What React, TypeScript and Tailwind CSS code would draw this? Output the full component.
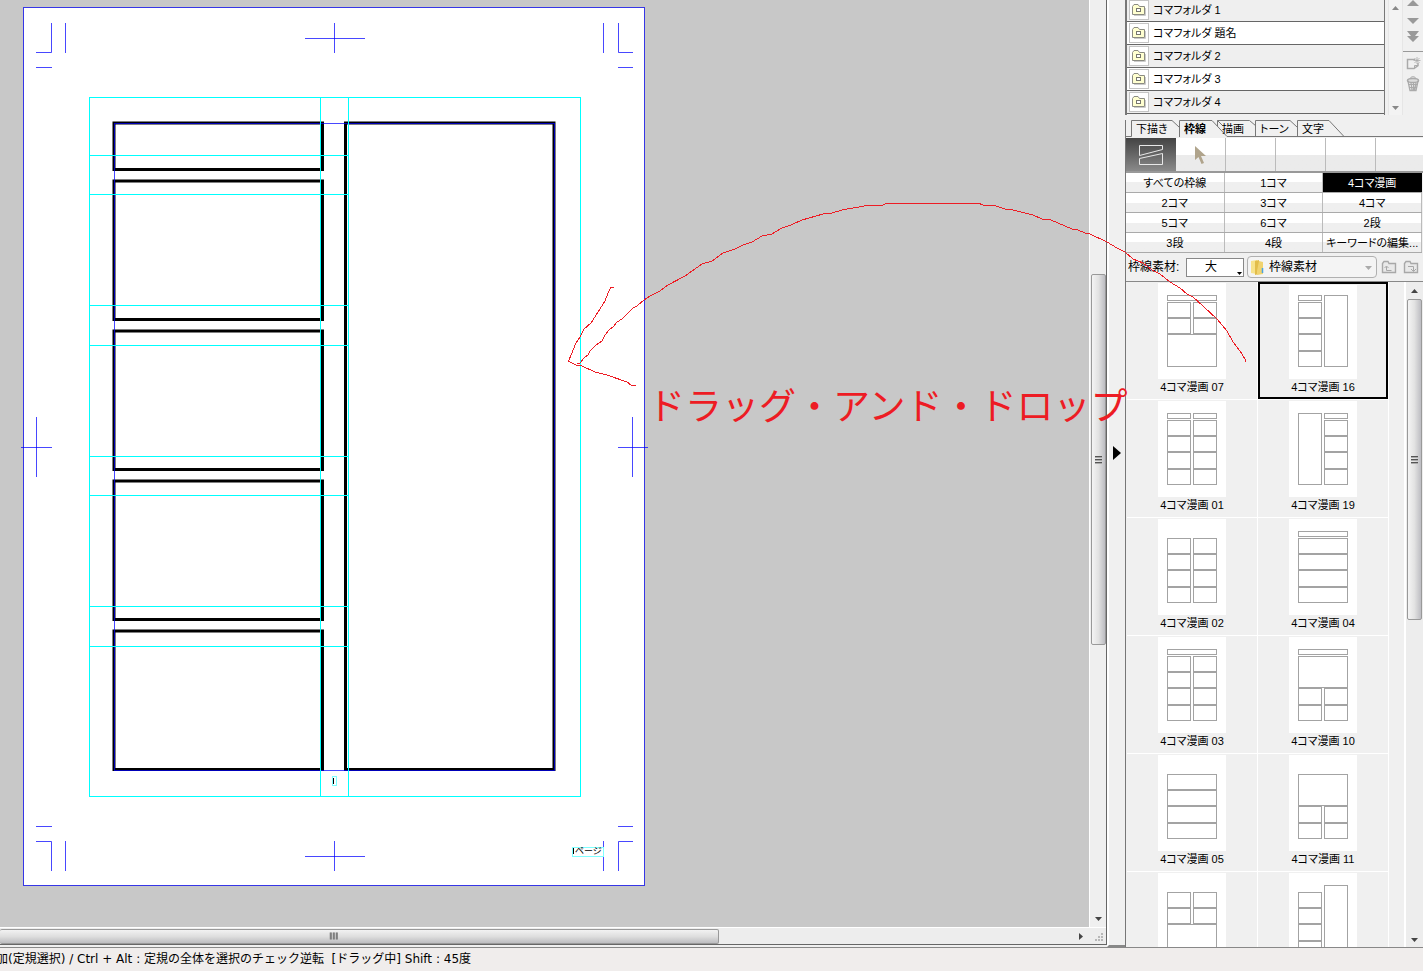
import { ReactNode } from 'react';

const UI_FONT = "font-['Liberation_Sans','Noto_Sans_CJK_JP',sans-serif] [font-feature-settings:'palt']";

const layers = ['コマフォルダ 1', 'コマフォルダ 題名', 'コマフォルダ 2', 'コマフォルダ 3', 'コマフォルダ 4'];

const tabs = [
  { name: '下描き', width: 'w-12' },
  { name: '枠線', width: 'w-[38px]' },
  { name: '描画', width: 'w-[38px]' },
  { name: 'トーン', width: 'w-[42px]' },
  { name: '文字', width: 'w-10' },
];

const keywords = [
  'すべての枠線', '1コマ', '4コマ漫画',
  '2コマ', '3コマ', '4コマ',
  '5コマ', '6コマ', '2段',
  '3段', '4段', 'キーワードの編集...',
];

type Box = [number, number, number, number];

const title = (x: number, w: number): Box => [x, 12, w, 5];
const ROWS: [number, number][] = [[19, 15], [35, 15], [51, 16], [68, 15]];
const rows = (x: number, w: number, from = 0, to = 4): Box[] =>
  ROWS.slice(from, to).map(([y, h]) => [x, y, w, h]);
const L = 9;
const R = 35;
const HALF = 23;
const FULL = 49;

const materials: { name?: string; boxes: Box[] }[] = [
  { name: '4コマ漫画 07', boxes: [title(L, FULL), ...rows(L, HALF, 0, 2), ...rows(R, HALF, 0, 2), [L, 51, FULL, 32]] },
  { name: '4コマ漫画 16', boxes: [title(L, HALF), ...rows(L, HALF), [R, 12, HALF, 71]] },
  { name: '4コマ漫画 01', boxes: [title(L, HALF), title(R, HALF), ...rows(L, HALF), ...rows(R, HALF)] },
  { name: '4コマ漫画 19', boxes: [[L, 12, HALF, 71], title(R, HALF), ...rows(R, HALF)] },
  { name: '4コマ漫画 02', boxes: [...rows(L, HALF), ...rows(R, HALF)] },
  { name: '4コマ漫画 04', boxes: [title(L, FULL), ...rows(L, FULL)] },
  { name: '4コマ漫画 03', boxes: [title(L, FULL), ...rows(L, HALF), ...rows(R, HALF)] },
  { name: '4コマ漫画 10', boxes: [title(L, FULL), [L, 19, FULL, 31], ...rows(L, HALF, 2), ...rows(R, HALF, 2)] },
  { name: '4コマ漫画 05', boxes: rows(L, FULL) },
  { name: '4コマ漫画 11', boxes: [[L, 19, FULL, 31], ...rows(L, HALF, 2), ...rows(R, HALF, 2)] },
  { boxes: [...rows(L, HALF, 0, 2), ...rows(R, HALF, 0, 2), [L, 51, FULL, 32]] },
  { boxes: [...rows(L, HALF), [R, 12, HALF, 71]] },
];

function Arrow({ dir, className = 'text-[#444]' }: { dir: 'up' | 'down' | 'right'; className?: string }) {
  const d = { up: 'M0 6 L3.5 2 L7 6Z', down: 'M0 2 L3.5 6 L7 2Z', right: 'M2 0 L6 3.5 L2 7Z' }[dir];
  return (
    <svg width="7" height="7" viewBox="0 0 7 7" className={className} aria-hidden="true">
      <path d={d} fill="currentColor" />
    </svg>
  );
}

function Grip() {
  return (
    <span className="flex flex-col gap-px" aria-hidden="true">
      {[0, 1, 2].map((i) => (
        <span key={i} className="h-0.5 w-[7px] border-t border-[#555] bg-[#aaa]" />
      ))}
    </span>
  );
}

function Page() {
  const frames: Box[] = [
    [114, 123, 208.5, 46.5],
    [114, 181, 208.5, 138.5],
    [114, 331, 208.5, 138.5],
    [114, 481, 208.5, 138.5],
    [114, 631, 208.5, 138.5],
    [345.5, 123, 208.5, 646.5],
  ];
  const guides = [155, 194, 305, 345, 456, 495, 606, 646];
  return (
    <svg width="1089" height="927" viewBox="0 0 1089 927" className="shrink-0" role="img" aria-label="原稿用紙">
      <rect x="23.5" y="7.5" width="621" height="878" fill="#fff" stroke="#3636e6" />
      <g fill="none" stroke="#000" strokeWidth="3">
        {frames.map(([x, y, w, h], i) => (
          <rect key={i} x={x} y={y} width={w} height={h} />
        ))}
      </g>
      <rect x="114.5" y="123.5" width="440" height="647" fill="none" stroke="#0000ff" strokeOpacity="0.72" />
      <path
        stroke="#0000ff"
        strokeOpacity="0.72"
        fill="none"
        d="M36 52.5H51.5V23M65.5 23V53M36 67.5H52M305 38.5H365M334.5 23V53M603.5 23V53M618.5 23V52.5H633M618 67.5H633
           M21 447.5H52M36.5 417V477M618 447.5H648M632.5 417V477
           M36 826.5H52M36 841.5H51.5V871M65.5 841V871M305 856.5H365M334.5 841V871M603.5 841V871M618.5 871V841.5H633M618 826.5H633"
      />
      <g stroke="#00ffff" fill="none">
        <rect x="89.5" y="97.5" width="491" height="699" />
        <path d="M320.5 97V797M348.5 97V797" />
        {guides.map((y) => (
          <path key={y} d={`M89 ${y + 0.5}H349`} />
        ))}
      </g>
      <rect x="332.5" y="776.5" width="4" height="9" fill="#fff" stroke="#7fffff" />
      <path d="M333.5 778V784" stroke="#000" />
      <rect x="572.5" y="847.5" width="31" height="9" fill="#fff" stroke="#7fffff" />
      <path d="M573.5 848V854" stroke="#000" />
      <text x="575" y="854" fontSize="9" className="font-['Noto_Sans_CJK_JP',sans-serif]">ページ</text>
    </svg>
  );
}

function LayerIcon() {
  return (
    <span className="ml-0.5 flex h-5 w-5 shrink-0 items-center justify-center border border-[#c4c4c4] bg-white">
      <svg width="14" height="12" viewBox="0 0 14 12">
        <path d="M.5 10.5V2.5L2 .5H6L7.5 2.5H12.5V10.5Z" fill="#ffffd0" stroke="#8c8c82" />
        <path d="M13.5 4V11.5H2" stroke="#ccc" fill="none" />
        <rect x="4.5" y="4.5" width="4" height="3" fill="#fff" stroke="#77776e" />
      </svg>
    </span>
  );
}

function LayerPanel() {
  return (
    <section className="flex h-[115px] border-l-2 border-[#777] bg-[#f0f0f0]" aria-label="レイヤー">
      <ul className="-mt-px w-[258px] border-r border-[#777]">
        {layers.map((name, i) => (
          <li key={name} className={`h-[23px] border-b border-[#666] ${i % 2 ? 'bg-white' : 'bg-[#efefef]'}`}>
            <button className="flex h-[22px] w-full items-center gap-1 text-left">
              <LayerIcon />
              <span>{name}</span>
            </button>
          </li>
        ))}
      </ul>
      <div className="ml-[3px] flex w-[15px] flex-col items-center justify-between border-x border-[#e6e6e6] bg-[#f3f3f3] pt-1 pb-1">
        <Arrow dir="up" className="text-[#888]" />
        <Arrow dir="down" className="text-[#888]" />
      </div>
      <div className="flex flex-1 flex-col items-center overflow-hidden">
        <svg width="20" height="94" viewBox="0 0 20 94" className="shrink-0">
          <g fill="#999">
            <path d="M4 6L10 0L16 6Z" />
            <path d="M4 18L10 24L16 18Z" />
            <path d="M4 31H16L12 36H16L10 42L4 36H8Z" />
          </g>
          <path d="M0 51.5H20" stroke="#999" />
          <g fill="none" stroke="#aaa">
            <path d="M12 59.500H4.500V68.500H11L15 65.500V63" strokeWidth="1.500" />
            <path d="M11.500 68V65.500H15" />
            <path d="M14 57V64M10.500 60.500H17.500M11.500 58L16.500 63M16.500 58L11.500 63" strokeWidth="0.8" />
            <ellipse cx="10" cy="80.500" rx="5.500" ry="2" fill="#ddd" strokeWidth="1.500" />
            <path d="M7 79C7 76 13 76 13 79" />
            <path d="M5 81L7 90.500H13L15 81M8 83L9 90M10.500 83V90M13 83L11.500 90" strokeWidth="1.300" />
            <path d="M5.500 84.500H14.500M6 87.500H14" />
          </g>
        </svg>
      </div>
    </section>
  );
}

function Tabs() {
  return (
    <div className="relative mt-[5px] h-[18px] border-l border-[#777]" role="tablist">
      <svg width="298" height="18" viewBox="0 0 298 18" className="absolute top-0 left-0" aria-hidden="true">
        <path
          d="M0 16.500H5.500V.500H46L53 7M53.500 17V.500H86L101 16.500H298M97 6L91.500 .500H123.500L130 6M129.500 17V.500H164L171 7M171.500 17V.500H203L218 16.500"
          fill="none"
          stroke="#777"
        />
        <path d="M91.500 .500V6" stroke="#777" />
      </svg>
      <div className="relative flex h-[18px] items-center pl-1.5">
        {tabs.map((t, i) => (
          <button
            key={t.name}
            role="tab"
            aria-selected={i === 1}
            className={`${t.width} shrink-0 pl-1 text-left whitespace-nowrap ${i === 1 ? 'font-bold' : ''}`}
          >
            {t.name}
          </button>
        ))}
      </div>
    </div>
  );
}

function ToolStrip() {
  const cell =
    'flex h-[33px] w-[50px] shrink-0 items-center justify-center border-r border-[#bbb] bg-linear-to-b from-white from-50% to-[#ebebeb] to-50%';
  return (
    <div className="flex overflow-hidden border-b-2 border-[#999]">
      <button
        aria-label="枠線ツール"
        className="flex h-[33px] w-[50px] shrink-0 items-center justify-center bg-linear-to-b from-[#444] to-[#8a8a8a]"
      >
        <svg width="26" height="22" viewBox="0 0 26 22" fill="none" stroke="#e8e8e8">
          <path d="M1.500 1.500H24.500V5.500L1.500 11.500ZM1.500 14.500L24.500 9.500V20.500H1.500Z" />
        </svg>
      </button>
      <button aria-label="選択ツール" className={cell}>
        <svg width="16" height="20" viewBox="0 0 16 20" fill="#b0a48c">
          <path d="M2 1V15L5.500 12L8.500 19L11 18L8 11H13Z" />
        </svg>
      </button>
      {[0, 1, 2].map((i) => (
        <span key={i} className={cell} />
      ))}
      <span className="flex-1 bg-linear-to-b from-white from-50% to-[#ebebeb] to-50%" />
    </div>
  );
}

function Keywords() {
  return (
    <div className="mr-px grid grid-cols-3">
      {keywords.map((k) => (
        <div key={k} className="flex h-5 border-b border-[#aaa]">
          <button
            className={`flex-1 overflow-hidden border-r text-center whitespace-nowrap ${
              k === '4コマ漫画'
                ? 'border-black bg-black text-white'
                : 'border-[#bbb] bg-linear-to-b from-white from-50% to-[#efefef] to-50%'
            }`}
          >
            {k}
          </button>
        </div>
      ))}
    </div>
  );
}

function FolderButton({ label, children }: { label: string; children: ReactNode }) {
  return (
    <button aria-label={label} className="flex shrink-0">
      <svg width="16" height="14" viewBox="0 0 16 14" fill="none" stroke="#a8a8a8">
        <path d="M1.500 12.500V3.500L3 1.500H7L8 3.500H14.500V12.500Z" fill="#e9e9e9" strokeWidth="1.400" />
        {children}
      </svg>
    </button>
  );
}

function FilterBar() {
  return (
    <div className="flex h-[29px] items-center border-b border-[#888] bg-[#f0f0f0] pl-0.5">
      <label htmlFor="size" className="w-[58px] text-xs whitespace-nowrap">枠線素材:</label>
      <div className="relative">
        <select
          id="size"
          className="block h-[19px] w-[58px] appearance-none border border-[#888] bg-white pr-2 text-xs leading-4 [text-align-last:center]"
        >
          <option>大</option>
        </select>
        <svg width="5" height="3" viewBox="0 0 5 3" className="pointer-events-none absolute right-0.5 bottom-0.5">
          <path d="M0 0H5L2.500 3Z" />
        </svg>
      </div>
      <div className="relative ml-[3px] flex h-[22px] w-[130px] items-center rounded-sm border border-[#b0b0b0] bg-[#f4f4f4] pl-0.5">
        <svg width="16" height="17" viewBox="0 0 16 17" className="shrink-0">
          <path d="M1 2L7 1V15L1 14Z" fill="#f7e28a" />
          <path d="M5 2L9 1V15L5 16Z" fill="#e2bd4a" />
          <path d="M9 2L13 3V15L7 16V12Z" fill="#f0d370" />
          <path d="M12.500 9V14" stroke="#4ba3e0" strokeWidth="1.500" />
        </svg>
        <select aria-label="素材フォルダ" className="h-5 flex-1 appearance-none bg-transparent pl-[3px] text-xs leading-4">
          <option>枠線素材</option>
        </select>
        <span className="pointer-events-none absolute right-1">
          <Arrow dir="down" className="text-[#aaa]" />
        </span>
      </div>
      <div className="ml-1 flex flex-1 justify-between pr-1">
        <FolderButton label="上のフォルダへ">
          <path d="M10.500 10.500H5.500V6.500M3.500 8L5.500 6L7.500 8" />
        </FolderButton>
        <FolderButton label="下のフォルダへ">
          <path d="M5 6.500H10.500V11M8 9L10.500 11.500L13 9" />
        </FolderButton>
      </div>
    </div>
  );
}

function Gallery() {
  return (
    <div className="flex min-h-0 flex-1 overflow-hidden bg-[#f0f0f0]">
      <ul className="ml-px grid w-[262px] shrink-0 auto-rows-[118px] grid-cols-2 overflow-hidden">
        {materials.map((m, index) => {
          const selected = index === 1;
          return (
            <li key={index} className="border-r border-b border-white">
              <button
                className={`flex h-full w-full flex-col items-center pt-px ${
                  selected ? 'shadow-[inset_0_0_0_2px_#000]' : ''
                }`}
              >
                <svg
                  width="68"
                  height="96"
                  viewBox="0 0 68 96"
                  className={selected ? 'mt-0.5 h-[94px]' : ''}
                  preserveAspectRatio="xMidYMax slice"
                >
                  <rect width="68" height="96" fill="#fff" />
                  <g fill="none" stroke="#a3a3a3">
                    {m.boxes.map(([x, y, w, h], i) => (
                      <rect key={i} x={x + 0.5} y={y + 0.5} width={w} height={h} />
                    ))}
                  </g>
                </svg>
                {m.name && <span className="leading-4">{m.name}</span>}
              </button>
            </li>
          );
        })}
      </ul>
      <div className="flex-1" />
      <div className="flex w-[19px] flex-col items-center border-l-2 border-white bg-[#ededed] pr-px pb-1">
        <span className="flex h-[17px] shrink-0 items-center">
          <Arrow dir="up" />
        </span>
        <span className="flex h-[321px] w-[15px] shrink-0 items-center justify-center rounded-xs border border-[#999] bg-linear-to-r from-[#f4f4f4] via-[#e2e2e2] to-[#bdbdc2]">
          <Grip />
        </span>
        <span className="flex-1" />
        <Arrow dir="down" />
      </div>
    </div>
  );
}

function Annotation() {
  return (
    <div className="pointer-events-none absolute top-0 left-0">
      <svg width="1260" height="400" viewBox="0 0 1260 400" fill="none" stroke="#ed1c24" shapeRendering="crispEdges" aria-hidden="true">
        <polyline points="577,363 580,363 584,358 588,355 590,351 596,345 602,341 605,335 609,330 613,327 617,322 622,319 633,308 637,306 644,300 650,296 660,291 668,285 685,276 702,264 712,261 723,253 735,249 743,245 752,242 762,236 772,234 782,228 791,225 802,220 823,214 832,213 842,210 853,208 870,205 883,205 887,203 978,203 983,205 993,205 1005,209 1013,210 1033,215 1042,219 1051,220 1072,229 1078,230 1085,233 1090,234 1107,242 1117,248 1125,252 1133,259 1143,263 1152,270 1160,274 1170,282 1180,288 1187,294 1193,297 1203,306 1217,319 1227,331 1233,342 1240,351 1245,359 1246,362" />
        <polyline points="614,287 611,287 608,293 605,301 591,323 584,329 580,337 576,343 569,360 568,361 576,365 582,366 595,372 607,375 627,382 631,385 636,385" />
      </svg>
      <p className="absolute top-[378px] left-[648px] font-['Noto_Sans_CJK_JP',sans-serif] text-[37px] leading-[52px] font-normal whitespace-nowrap text-[#ed1c24] [font-feature-settings:normal]">
        ドラッグ・アンド・ドロップ
      </p>
    </div>
  );
}

export default function App() {
  return (
    <div className={`relative flex h-screen flex-col overflow-hidden bg-[#f0f0f0] text-[11px] leading-4 text-black ${UI_FONT}`}>
      <main className="flex min-h-0 flex-1 border-b border-[#888]">
        <div className="mb-0.5 flex min-w-0 flex-1 flex-col border-r border-b border-[#666]">
          <div className="flex min-h-0 flex-1">
            <div className="flex min-w-0 flex-1 overflow-hidden bg-[#c8c8c8]">
              <Page />
            </div>
            <div className="flex w-[17px] flex-col items-center border-l border-white bg-[#efefef] pb-[5px]">
              <span className="h-[274px] shrink-0" />
              <span className="flex h-[371px] w-[15px] shrink-0 items-center justify-center rounded-xs border border-[#999] bg-linear-to-r from-[#f4f4f4] via-[#e2e2e2] to-[#bdbdc2]">
                <Grip />
              </span>
              <span className="flex-1" />
              <Arrow dir="down" />
            </div>
          </div>
          <div className="flex h-[17px] items-center border-t border-white bg-[#ededed]">
            <span className="flex h-[15px] w-[719px] shrink-0 items-center rounded-xs border border-l-0 border-[#999] bg-linear-to-b from-[#f2f2f2] via-[#dedede] to-[#bdbdc0] pl-[330px]">
              <span className="rotate-90">
                <Grip />
              </span>
            </span>
            <span className="flex-1" />
            <Arrow dir="right" />
            <svg width="22" height="14" viewBox="0 0 22 14" fill="#b8b8b8">
              <path d="M17 4h2v2h-2zM14 7h2v2h-2zM17 7h2v2h-2zM11 10h2v2h-2zM14 10h2v2h-2zM17 10h2v2h-2z" />
            </svg>
          </div>
        </div>
        <button
          aria-label="パレットを閉じる"
          className="flex w-[18px] shrink-0 items-center justify-center border-b-2 border-l-2 border-b-[#888] border-l-white bg-[#f0f0f0]"
        >
          <svg width="8" height="14" viewBox="0 0 8 14" className="mb-10">
            <path d="M0 0L8 7L0 14Z" />
          </svg>
        </button>
        <aside className="flex w-[298px] shrink-0 flex-col">
          <LayerPanel />
          <Tabs />
          <div className="flex min-h-0 flex-1 flex-col border-l border-[#777]">
            <ToolStrip />
            <Keywords />
            <FilterBar />
            <Gallery />
          </div>
        </aside>
      </main>
      <footer className="h-[23px] shrink-0 overflow-hidden bg-[#f0edec] font-['DejaVu_Sans','Noto_Sans_CJK_JP',sans-serif] text-xs leading-[23px] whitespace-pre [font-feature-settings:normal]">
        <span className="-ml-1">加(定規選択) / Ctrl + Alt : 定規の全体を選択のチェック逆転  [ドラッグ中] Shift : 45度</span>
      </footer>
      <Annotation />
    </div>
  );
}
